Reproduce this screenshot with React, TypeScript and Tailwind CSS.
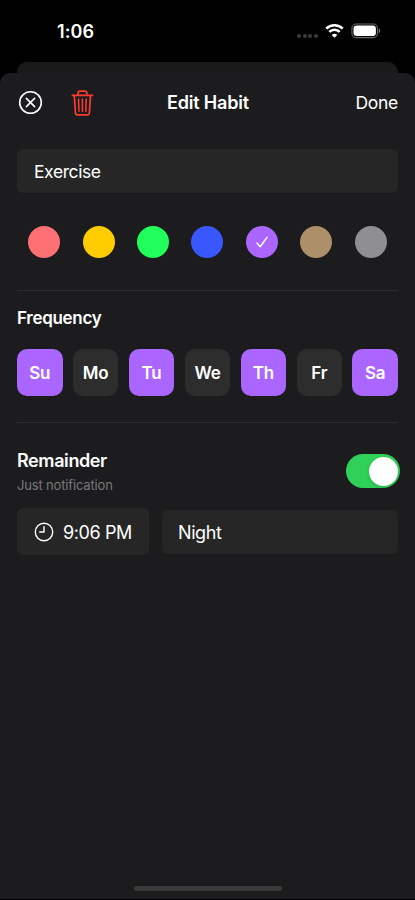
import React from "react";

const colors = [
  "bg-[#ff7074]",
  "bg-[#ffcc00]",
  "bg-[#20ff5c]",
  "bg-[#3857ff]",
  "bg-[#ab66ff]",
  "bg-[#ac8e68]",
  "bg-[#8e8e93]",
];

const days = [
  { name: "Su", on: true },
  { name: "Mo", on: false },
  { name: "Tu", on: true },
  { name: "We", on: false },
  { name: "Th", on: true },
  { name: "Fr", on: false },
  { name: "Sa", on: true },
];

function StatusBar() {
  return (
    <div className="flex h-[62px] items-start justify-between pr-[34px] pl-[57px]">
      <span className="pt-5 text-[18px] leading-6 font-semibold tracking-[0.1px]">1:06</span>
      <div className="flex pt-[22px]">
        <div className="mt-[11.5px] flex gap-[1.7px]">
          {[0, 1, 2, 3].map((i) => (
            <span key={i} className="size-1 rounded-full bg-[#3c3c3c]" />
          ))}
        </div>
        <svg className="mt-[1px] ml-[7px]" width="19" height="16" viewBox="0 0 19 16" fill="none" stroke="#fff" strokeWidth="2.6">
          <path d="M1.3 5.6a11.7 11.7 0 0 1 16.4 0" />
          <path d="M4.3 8.9a7.4 7.4 0 0 1 10.4 0" />
          <path d="M9.5 14.8 6.7 12a4 4 0 0 1 5.6 0z" fill="#fff" stroke="none" />
        </svg>
        <svg className="ml-[7px]" width="30" height="17" viewBox="0 0 30 17">
          <rect x="0.9" y="2" width="25.6" height="13.6" rx="4.4" fill="none" stroke="#686868" strokeWidth="1.1" />
          <rect x="2.5" y="3.6" width="22.4" height="10.4" rx="3.2" fill="#fff" />
          <path d="M27.8 6.5c1.9.7 1.9 3.9 0 4.6z" fill="#777" />
        </svg>
      </div>
    </div>
  );
}

function Header() {
  return (
    <div className="grid h-[60px] grid-cols-3 items-center pr-[17px] pl-[18px]">
      <div className="flex items-center gap-[28px]">
        <svg width="25" height="26" viewBox="0 0 25 26" fill="none" stroke="#fff" strokeWidth="1.6" strokeLinecap="round">
          <circle cx="12.5" cy="12.5" r="10.8" />
          <path d="m8.4 8.4 8.2 8.2m0-8.2-8.2 8.2" />
        </svg>
        <svg width="23" height="28" viewBox="0 0 23 28" fill="none" stroke="#ff3b30" strokeWidth="1.7" strokeLinecap="round" strokeLinejoin="round">
          <path d="M1.3 6.3h20.2M3.3 6.3l1.1 17.4q.1 2.2 2.3 2.2h9.4q2.2 0 2.3-2.2L19.5 6.3M7.1 6.1V4.2q0-2 2-2h4.7q2 0 2 2v1.9" />
          <path d="m7.6 10 .4 12.3M11.4 10v12.3M15.2 10l-.4 12.3" strokeWidth="1.5" />
        </svg>
      </div>
      <h1 className="text-center text-[18px] leading-6 font-semibold tracking-[-0.2px]">Edit Habit</h1>
      <button className="text-right text-[17.5px] leading-6 tracking-[-0.3px]">Done</button>
    </div>
  );
}

export default function App() {
  return (
    <div className="flex h-[900px] w-[415px] flex-col overflow-hidden bg-black font-['Inter',sans-serif] text-white">
      <StatusBar />
      <div className="mx-[17px] h-[21px] shrink-0 rounded-t-[10px] bg-[#1a1a1a]" />
      <main className="-mt-[10px] flex h-[826px] shrink-0 flex-col rounded-t-[10px] bg-[#1c1c1e]">
        <Header />
        <div className="flex flex-1 flex-col px-[17px]">
          <div className="mt-4 flex h-[44px] items-center rounded-[6px] bg-[#262626] px-[17px] pt-[2px] text-[17.5px] tracking-[-0.4px]">
            Exercise
          </div>
          <div className="mt-[33px] grid grid-cols-7 justify-items-center">
            {colors.map((c) => (
              <div key={c} className={`flex size-8 items-center justify-center rounded-full ${c}`}>
                {c === "bg-[#ab66ff]" && (
                  <svg width="14" height="14" viewBox="0 0 14 14" fill="none" stroke="#fff" strokeWidth="1.5" strokeLinecap="round" strokeLinejoin="round">
                    <path d="m2 8 3.2 3.8L12 2.4" />
                  </svg>
                )}
              </div>
            ))}
          </div>
          <div className="mt-8 h-px bg-[#2d2d2f]" />
          <h2 className="mt-[15px] text-[17px] leading-6 font-semibold tracking-[-0.3px]">Frequency</h2>
          <div className="mt-[19px] grid grid-cols-7 gap-[10.4px]">
            {days.map((d) => (
              <div
                key={d.name}
                className={`flex h-[47px] items-center justify-center rounded-[10px] pt-[3px] text-[17px] font-semibold tracking-[-0.2px] ${d.on ? "bg-[#ab66ff]" : "bg-[#2d2d2d]"}`}
              >
                {d.name}
              </div>
            ))}
          </div>
          <div className="mt-[26px] h-px bg-[#2d2d2f]" />
          <div className="mt-[25px] -mr-[2px] flex justify-between">
            <div>
              <h2 className="mt-px text-[18px] leading-6 font-semibold tracking-[-0.4px]">Remainder</h2>
              <p className="mt-1 text-[13px] leading-4 tracking-[-0.16px] text-[#79797a]">Just notification</p>
            </div>
            <div className="mt-[6px] flex h-[34px] w-[54px] items-center justify-end rounded-full bg-[#30d158] pr-[2px]">
              <span className="size-[29px] rounded-full bg-white shadow-[0_2px_5px_rgba(0,0,0,0.15)]" />
            </div>
          </div>
          <div className="mt-[15px] flex items-center gap-[13px]">
            <div className="flex h-[47px] w-[131.5px] items-center rounded-[6px] bg-[#262626] pl-[17px] text-[18px] tracking-[-0.4px] whitespace-nowrap">
              <svg className="mr-[9px]" width="20" height="20" viewBox="0 0 20 20" fill="none" stroke="#fff" strokeWidth="1.4" strokeLinecap="round" strokeLinejoin="round">
                <circle cx="10" cy="10" r="8.7" />
                <path d="M10 4.7V10H5.7" />
              </svg>
              <span className="pt-px">9:06 PM</span>
            </div>
            <div className="flex h-[44px] flex-1 items-center rounded-[6px] bg-[#262626] px-[16.5px] pt-px text-[18px] tracking-[-0.4px]">
              Night
            </div>
          </div>
        </div>
        <div className="mb-2 ml-[134px] h-[5.5px] w-[148px] rounded-full bg-[#3a3a3a]" />
      </main>
    </div>
  );
}
